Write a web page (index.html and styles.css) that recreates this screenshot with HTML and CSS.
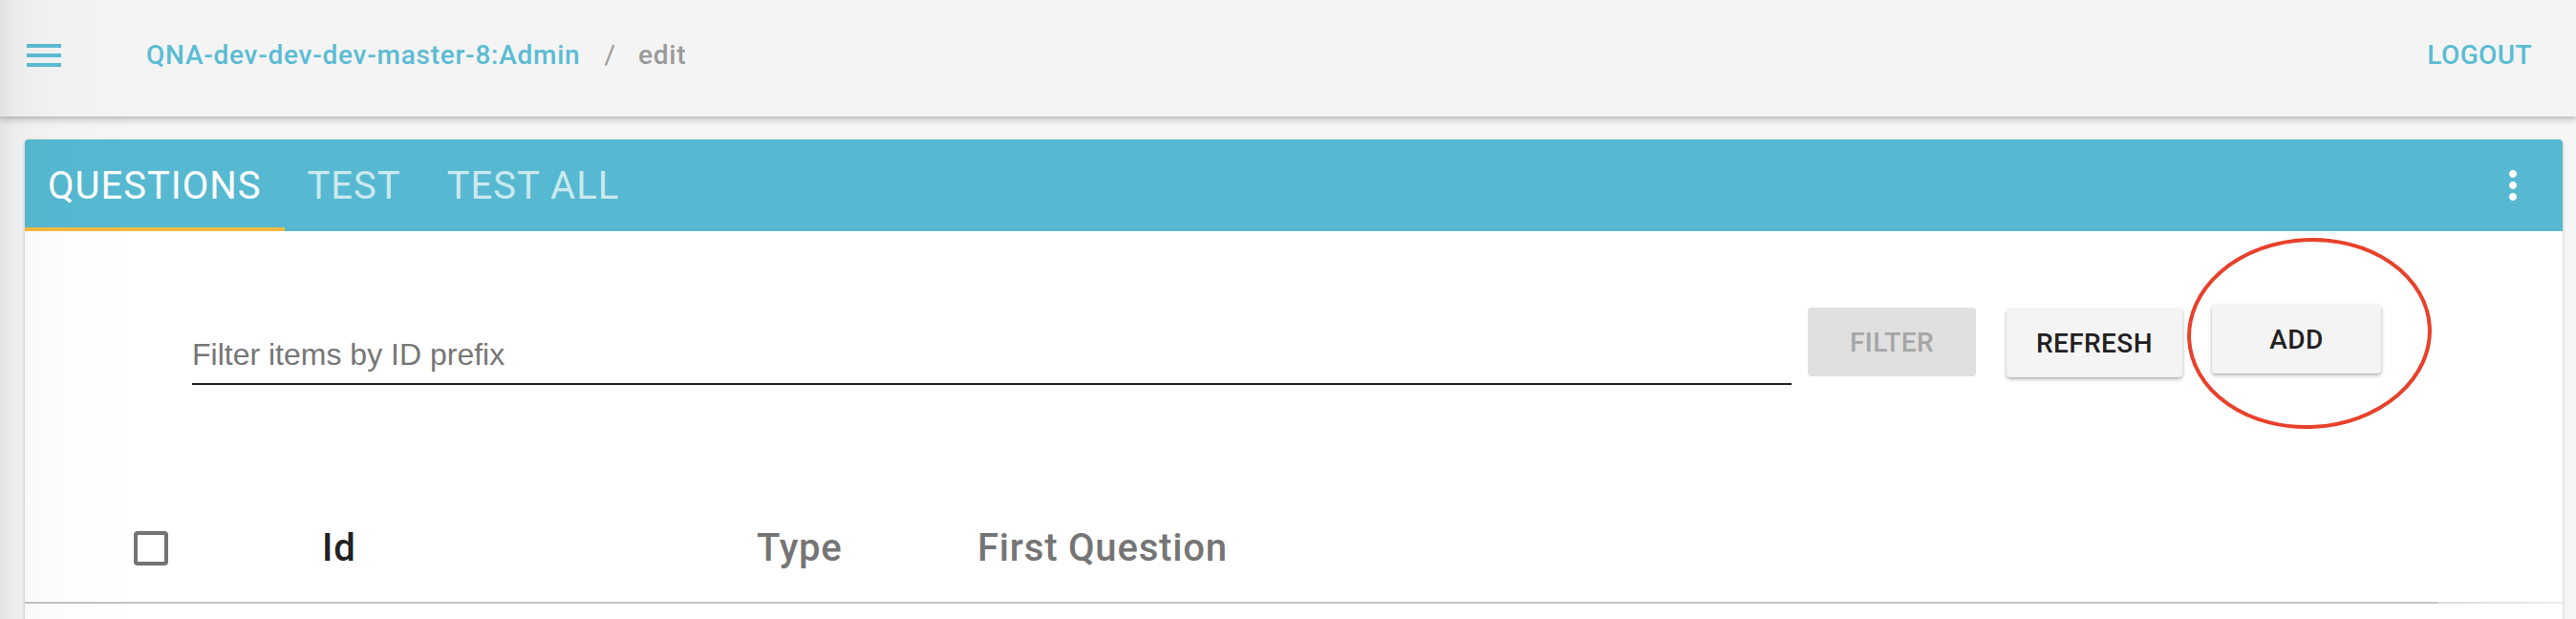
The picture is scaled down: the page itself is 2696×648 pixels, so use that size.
FILE: index.html
```html
<!DOCTYPE html>
<html lang="en">
<head>
<meta charset="utf-8">
<title>QNA Admin - edit</title>
<link rel="stylesheet" href="styles.css">
</head>
<body>
<div class="drawer-shade"></div>
<header class="appbar">
  <button class="icon-btn menu-btn" aria-label="menu">
    <svg viewBox="0 0 24 24" width="48" height="48"><path d="M3 18h18v-2H3v2zm0-5h18v-2H3v2zm0-7v2h18V6H3z"/></svg>
  </button>
  <nav class="crumbs">
    <a class="crumb-link">QNA-dev-dev-dev-master-8:Admin</a>
    <span class="crumb-sep">/</span>
    <span class="crumb-current">edit</span>
  </nav>
  <a class="logout">LOGOUT</a>
</header>
<main class="page">
  <section class="card">
    <div class="tabbar">
      <div class="tabs">
        <div class="tab active">QUESTIONS</div>
        <div class="tab">TEST</div>
        <div class="tab">TEST ALL</div>
      </div>
      <button class="icon-btn more-btn" aria-label="more">
        <svg viewBox="0 0 24 24" width="48" height="48"><path d="M12 8c1.1 0 2-.9 2-2s-.9-2-2-2-2 .9-2 2 .9 2 2 2zm0 2c-1.1 0-2 .9-2 2s.9 2 2 2 2-.9 2-2-.9-2-2-2zm0 6c-1.1 0-2 .9-2 2s.9 2 2 2 2-.9 2-2-.9-2-2-2z"/></svg>
      </button>
    </div>
    <div class="card-body">
      <div class="filter-row">
        <label class="field"><input class="field-input" type="text" placeholder="Filter items by ID prefix"></label>
        <button class="btn btn-disabled">FILTER</button>
        <button class="btn btn-raised btn-refresh">REFRESH</button>
        <button class="btn btn-raised btn-add">ADD</button>
      </div>
      <div class="table-head">
        <div class="th th-check"><span class="checkbox"></span></div>
        <div class="th th-id">Id</div>
        <div class="th">Type</div>
        <div class="th">First Question</div>
      </div>
      <div class="rule"></div>
    </div>
  </section>
</main>
<svg class="annotation" viewBox="0 0 258 202" width="258" height="202" aria-hidden="true">
  <ellipse cx="129" cy="101" rx="126" ry="98" transform="rotate(-3 129 101)"/>
</svg>
</body>
</html>
```

FILE: styles.css
```css
* { box-sizing: border-box; }

html, body {
  margin: 0;
  padding: 0;
}

body {
  background: #f6f6f6;
  font-family: Roboto, "Liberation Sans", Arial, sans-serif;
  width: 2696px;
  height: 648px;
  overflow: hidden;
  position: relative;
}

.drawer-shade {
  position: absolute;
  left: 0;
  top: 0;
  width: 160px;
  height: 100%;
  background: linear-gradient(to right, rgba(0,0,0,0.075) 0px, rgba(0,0,0,0.035) 14px, rgba(0,0,0,0.012) 50px, rgba(0,0,0,0) 150px);
  pointer-events: none;
  z-index: 10;
}

.icon-btn {
  border: 0;
  background: transparent;
  padding: 0;
  margin: 0;
  width: 48px;
  height: 48px;
  display: flex;
  align-items: center;
  justify-content: center;
  cursor: pointer;
}

.icon-btn svg { display: block; }

/* App bar */
.appbar {
  position: relative;
  z-index: 5;
  height: 122px;
  background: #f4f4f4;
  box-shadow: 0 3px 8px rgba(0,0,0,0.22), 0 1px 3px rgba(0,0,0,0.12);
  display: flex;
  align-items: center;
  padding: 0 14px 6px 22px;
}

.menu-btn svg { fill: #5bbcd3; }

.crumbs {
  display: flex;
  align-items: baseline;
  margin-left: 83px;
  font-size: 28px;
  line-height: 40px;
  flex: 1;
}

.crumb-link {
  color: #5bbcd3;
  font-weight: 500;
  letter-spacing: 0.75px;
}

.crumb-sep {
  color: #9a9a9a;
  margin: 0 24px 0 25px;
}

.crumb-current {
  color: #9a9a9a;
  font-weight: 500;
  letter-spacing: 0.8px;
}

.logout {
  color: #5bbcd3;
  font-size: 28px;
  font-weight: 500;
  letter-spacing: 0.4px;
  padding: 0 32px;
  line-height: 40px;
}

/* Page */
.page {
  padding: 24px 14px 0 26px;
}

.card {
  background: #ffffff;
  border-radius: 4px;
  box-shadow: 0 1px 4px rgba(0,0,0,0.16), 0 1px 2px rgba(0,0,0,0.1);
  overflow: hidden;
  padding-bottom: 120px;
}

.tabbar {
  height: 96px;
  background: #56b9d1;
  display: flex;
  align-items: stretch;
  justify-content: space-between;
}

.tabs {
  display: flex;
  align-items: stretch;
}

.tab {
  position: relative;
  display: flex;
  align-items: center;
  padding: 0 24px;
  font-size: 40px;
  letter-spacing: 1px;
  color: rgba(255,255,255,0.7);
}

.tab.active { color: #ffffff; }

.tab.active::after {
  content: "";
  position: absolute;
  left: 0;
  right: 0;
  bottom: 0;
  height: 4px;
  background: #f6b93e;
}

.more-btn {
  align-self: center;
  margin-right: 28px;
}

.more-btn svg { fill: #ffffff; }

/* Body */
.card-body {
  padding-top: 77px;
}

.filter-row {
  display: flex;
  align-items: flex-start;
  padding: 0 190px 0 175px;
}

.field {
  flex: 1;
  margin-top: 3px;
  padding: 29px 0 10px;
  border-bottom: 2px solid #212121;
  margin-right: 17px;
  display: block;
}

.field-input {
  display: block;
  width: 100%;
  border: 0;
  outline: 0;
  padding: 0;
  margin: 0;
  background: transparent;
  font-family: "Liberation Sans", Arial, Helvetica, sans-serif;
  font-size: 32px;
  line-height: 40px;
  height: 40px;
  color: #212121;
}

.field-input::placeholder {
  color: #767676;
  opacity: 1;
}

.btn {
  border: 0;
  border-radius: 4px;
  height: 72px;
  padding: 0;
  font-family: Roboto, "Liberation Sans", Arial, sans-serif;
  font-size: 28px;
  font-weight: 500;
  letter-spacing: 0.4px;
  display: flex;
  align-items: center;
  justify-content: center;
  flex: none;
}

.btn-disabled {
  width: 176px;
  background: #e0e0e0;
  color: #a6a6a6;
  margin-top: 3px;
}

.btn-raised {
  background: #f4f4f4;
  color: #212121;
  box-shadow: 0 2px 4px rgba(0,0,0,0.26), 0 1px 2px rgba(0,0,0,0.12);
}

.btn-refresh {
  width: 184px;
  margin-left: 32px;
  margin-top: 4px;
}

.btn-add {
  width: 177px;
  margin-left: 31px;
}

/* Table header */
.table-head {
  margin-top: 115px;
  height: 112px;
  display: grid;
  grid-template-columns: 197px 455px 231px 1fr;
  align-items: center;
  padding-left: 114px;
}

.th {
  font-size: 40px;
  line-height: 48px;
  font-weight: 500;
  color: #757575;
  letter-spacing: 0.8px;
}

.th-id { color: #212121; }

.th-check {
  display: flex;
  align-items: center;
}

.checkbox {
  display: block;
  width: 36px;
  height: 36px;
  border: 4px solid #737373;
  border-radius: 4px;
}

.rule {
  height: 2px;
  background: linear-gradient(to right, #c4c4c4 0%, #c4c4c4 95.1%, #dcdcdc 95.1%, #ebebeb 100%);
}

/* Annotation */
.annotation {
  position: absolute;
  left: 2288px;
  top: 248px;
  z-index: 20;
  overflow: visible;
}

.annotation ellipse {
  fill: none;
  stroke: #e8412b;
  stroke-width: 4;
}
```
